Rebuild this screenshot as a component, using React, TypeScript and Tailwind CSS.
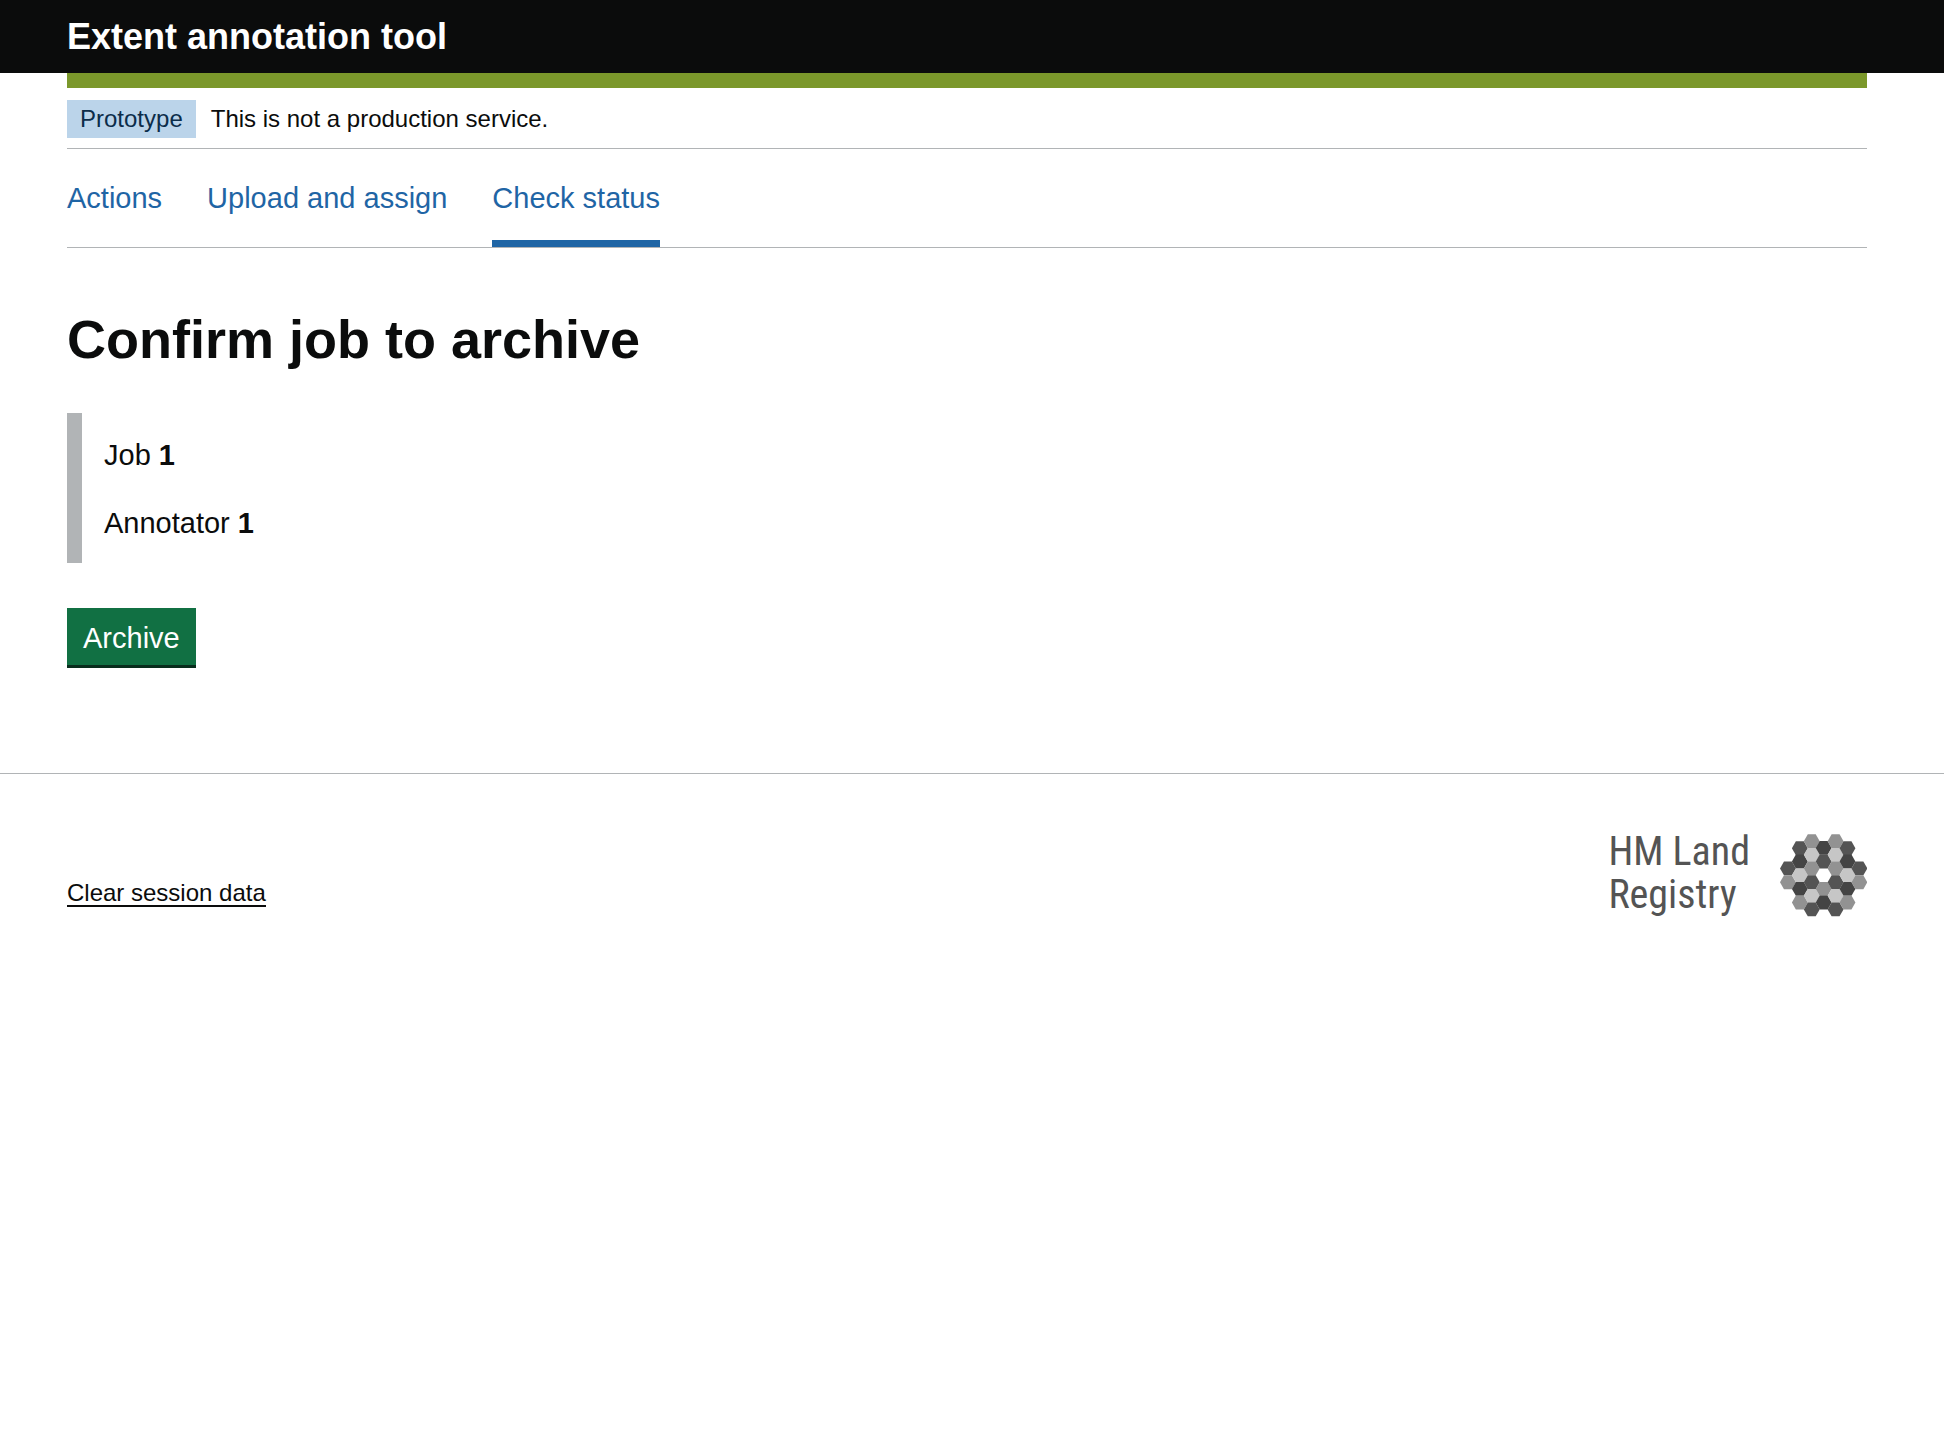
import type { ReactNode } from "react";

const DARK = "#444444";
const CHAR = "#545454";
const GREY = "#929292";
const PALE = "#c6c6c6";

const hexagons: [number, number, string][] = [
  [53, 129, CHAR], [53, 171, GREY],
  [89, 68, CHAR], [89, 108, DARK], [89, 150, PALE], [89, 191, DARK], [89, 232, GREY],
  [125, 47, GREY], [125, 88, PALE], [125, 129, GREY], [125, 171, CHAR], [125, 212, PALE], [125, 253, CHAR],
  [161, 67, DARK], [161, 108, CHAR], [161, 191, GREY], [161, 232, DARK],
  [197, 47, GREY], [197, 88, PALE], [197, 129, GREY], [197, 171, CHAR], [197, 212, PALE], [197, 253, CHAR],
  [233, 68, CHAR], [233, 108, DARK], [233, 150, PALE], [233, 191, DARK], [233, 232, GREY],
  [269, 129, CHAR], [269, 171, GREY],
];

function HexMark() {
  return (
    <svg viewBox="29 26 263 249" className="h-[83px] w-[87px]" aria-hidden="true">
      {hexagons.map(([x, y, fill]) => (
        <polygon
          key={`${x}-${y}`}
          fill={fill}
          points={`${x - 24},${y} ${x - 12},${y - 21} ${x + 12},${y - 21} ${x + 24},${y} ${x + 12},${y + 21} ${x - 12},${y + 21}`}
        />
      ))}
    </svg>
  );
}

function Container({ children }: { children: ReactNode }) {
  return <div className="pr-[77px] pl-[67px]">{children}</div>;
}

const links = [
  { label: "Actions", current: false },
  { label: "Upload and assign", current: false },
  { label: "Check status", current: true },
];

export default function App() {
  return (
    <div className="bg-white font-['Liberation_Sans',Arial,sans-serif] text-[29px] leading-9 text-[#0b0c0c]">
      <header>
        <div className="bg-[#0b0c0c]">
          <Container>
            <a href="#" className="block pt-[17px] pb-4 text-[36px] leading-10 font-bold text-white">
              Extent annotation tool
            </a>
          </Container>
        </div>
        <Container>
          <div className="h-[15px] bg-[#7b982b]" />
          <div className="flex items-center gap-[15px] border-b border-[#b1b4b6] pt-3 pb-[10px] text-[24px] leading-[38px]">
            <strong className="bg-[#bbd4ea] px-[13px] font-normal text-[#0c2d4a]">Prototype</strong>
            <span>This is not a production service.</span>
          </div>
          <nav className="flex gap-[45px] border-b border-[#b1b4b6]" aria-label="Main">
            {links.map((l) => (
              <a
                key={l.label}
                href="#"
                aria-current={l.current ? "page" : undefined}
                className={
                  l.current
                    ? "border-b-7 border-[#1f65a5] pt-[31px] pb-6 text-[#1f65a5]"
                    : "border-b-7 border-transparent pt-[31px] pb-6 text-[#1f65a5]"
                }
              >
                {l.label}
              </a>
            ))}
          </nav>
        </Container>
      </header>
      <main>
        <Container>
          <h1 className="pt-[61px] text-[54px] leading-[60px] font-bold">Confirm job to archive</h1>
          <div className="mt-11 flex flex-col gap-8 border-l-15 border-[#b1b4b6] pt-6 pb-[22px] pl-[22px]">
            <p>
              Job <strong>1</strong>
            </p>
            <p>
              Annotator <strong>1</strong>
            </p>
          </div>
          <button
            type="button"
            className="mt-[45px] block border-b-3 border-[#082d1c] bg-[#117043] px-4 pt-3 pb-[9px] text-white"
          >
            Archive
          </button>
        </Container>
      </main>
      <footer className="mt-[105px] border-t border-[#b1b4b6]">
        <Container>
          <div className="flex items-end justify-between pt-[60px]">
            <a href="#" className="mb-[10px] border-b-2 border-[#0b0c0c] text-[24px] leading-6">
              Clear session data
            </a>
            <div className="flex items-start gap-[30px]">
              <p className="-mt-1 font-['Roboto_Condensed',Roboto,sans-serif] text-[40px] leading-[43px] text-[#545454]">
                HM Land
                <br />
                Registry
              </p>
              <HexMark />
            </div>
          </div>
        </Container>
      </footer>
    </div>
  );
}
